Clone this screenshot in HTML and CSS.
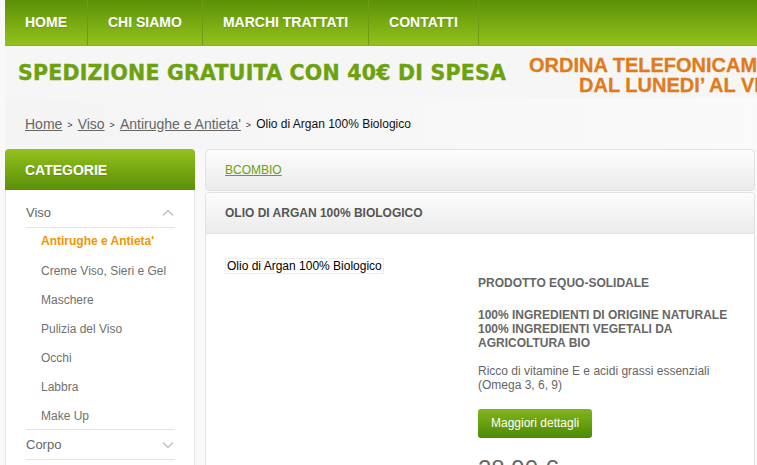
FILE: index.html
```html
<!DOCTYPE html>
<html lang="it">
<head>
<meta charset="utf-8">
<title>Olio di Argan 100% Biologico</title>
<link rel="stylesheet" href="styles.css">
</head>
<body>
<div class="page">
  <nav class="topnav">
    <a class="nav-item" href="#">HOME</a>
    <a class="nav-item" href="#">CHI SIAMO</a>
    <a class="nav-item" href="#">MARCHI TRATTATI</a>
    <a class="nav-item" href="#">CONTATTI</a>
  </nav>
  <div class="banner">
    <div class="promo">SPEDIZIONE GRATUITA CON 40€ DI SPESA</div>
    <div class="phone">
      <div class="phone-l1">ORDINA TELEFONICAMENTE</div>
      <div class="phone-l2">DAL LUNEDI’ AL VENERDI’</div>
    </div>
  </div>
  <div class="crumbs">
    <a href="#">Home</a><span class="sep">&gt;</span><a href="#">Viso</a><span class="sep">&gt;</span><a href="#">Antirughe e Antieta'</a><span class="sep">&gt;</span><span class="current">Olio di Argan 100% Biologico</span>
  </div>
  <div class="main">
    <aside class="sidebar">
      <div class="side-head">CATEGORIE</div>
      <ul class="cats">
        <li class="cat open">
          <div class="cat-row"><span>Viso</span><svg class="chev" width="12" height="8" viewBox="0 0 12 8"><path d="M1 6.5 L6 1.5 L11 6.5" fill="none" stroke="#bbb" stroke-width="1.2"/></svg></div>
          <ul class="subs">
            <li class="active">Antirughe e Antieta'</li>
            <li>Creme Viso, Sieri e Gel</li>
            <li>Maschere</li>
            <li>Pulizia del Viso</li>
            <li>Occhi</li>
            <li>Labbra</li>
            <li>Make Up</li>
          </ul>
        </li>
        <li class="cat">
          <div class="cat-row"><span>Corpo</span><svg class="chev" width="12" height="8" viewBox="0 0 12 8"><path d="M1 1.5 L6 6.5 L11 1.5" fill="none" stroke="#bbb" stroke-width="1.2"/></svg></div>
        </li>
      </ul>
    </aside>
    <section class="content">
      <div class="panel brand"><a href="#">BCOMBIO</a></div>
      <div class="panel product">
        <div class="prod-head">OLIO DI ARGAN 100% BIOLOGICO</div>
        <div class="prod-body">
          <div class="prod-img"><span class="alt">Olio di Argan 100% Biologico</span></div>
          <div class="prod-info">
            <p class="strong">PRODOTTO EQUO-SOLIDALE</p>
            <p class="strong tight">100% INGREDIENTI DI ORIGINE NATURALE<br>100% INGREDIENTI VEGETALI DA AGRICOLTURA BIO</p>
            <p class="desc">Ricco di vitamine E e acidi grassi essenziali (Omega 3, 6, 9)</p>
            <a class="btn" href="#">Maggiori dettagli</a>
            <div class="price">28,90 €</div>
          </div>
        </div>
      </div>
    </section>
  </div>
</div>
</body>
</html>
```

FILE: styles.css
```css
html, body {
  margin: 0;
  padding: 0;
  overflow: hidden;
}
body {
  background: #f9f9f9;
  font-family: "Liberation Sans", Arial, sans-serif;
  color: #666;
}
.page {
  padding-left: 5px;
  width: 900px;
}
.topnav {
  display: flex;
  height: 45px;
  background: linear-gradient(#5c9106, #93c11c);
  border-bottom: 1px solid #86b524;
}
.nav-item {
  display: flex;
  align-items: center;
  padding: 0 20px 2px;
  border-right: 1px solid #6d9b14;
  color: #fff;
  font-weight: bold;
  font-size: 14px;
  text-decoration: none;
  text-shadow: 0 1px 0 rgba(0,0,0,0.15);
}
.banner {
  display: flex;
  align-items: flex-start;
  height: 52px;
  background: #f6f6f6;
  white-space: nowrap;
}
.promo {
  margin: 15px 0 0 13px;
  font-family: "DejaVu Sans", "Liberation Sans", sans-serif;
  font-size: 20.5px;
  font-weight: bold;
  letter-spacing: 0.22px;
  color: #6da20f;
  -webkit-text-stroke: 0.4px #6da20f;
}
.phone {
  margin: 9px 0 0 23px;
  font-size: 20px;
  font-weight: bold;
  color: #e07b1c;
  line-height: 20px;
  -webkit-text-stroke: 0.3px #e07b1c;
}
.phone-l2 {
  padding-left: 50px;
}
.crumbs {
  height: 51px;
  display: flex;
  align-items: center;
  padding-left: 20px;
  font-size: 14px;
  background: linear-gradient(90deg, #f4f4f4, #fbfbfb);
}
.crumbs a {
  color: #666;
}
.crumbs .sep {
  font-size: 9px;
  margin: 2px 5px 0;
  color: #333;
}
.crumbs .current {
  font-size: 12px;
  color: #111;
}
.main {
  display: flex;
  gap: 10px;
}
.sidebar {
  width: 190px;
  flex: none;
}
.side-head {
  height: 41px;
  display: flex;
  align-items: center;
  padding-left: 20px;
  border-radius: 4px 4px 0 0;
  background: linear-gradient(#94c11e, #5a8f07);
  color: #fff;
  font-weight: bold;
  font-size: 14px;
  text-shadow: 0 1px 0 rgba(0,0,0,0.15);
}
.cats {
  list-style: none;
  margin: 0;
  padding: 8px 19px 0 20px;
  background: #fff;
  border-left: 1px solid #e6e6e6;
  border-right: 1px solid #e6e6e6;
  height: 400px;
}
.cat {
  border-bottom: 1px solid #e4e4e4;
}
.cat-row {
  display: flex;
  justify-content: space-between;
  align-items: center;
  height: 29px;
  font-size: 13px;
  color: #666;
  padding-right: 1px;
}
.open .cat-row {
  height: 29px;
}
.subs {
  list-style: none;
  margin: 0;
  padding: 0 0 0 15px;
  border-top: 1px solid #e4e4e4;
}
.subs li {
  height: 29px;
  line-height: 29px;
  font-size: 12px;
  color: #707070;
}
.subs li:last-child {
  height: 27px;
}
.subs li.active {
  color: #f29400;
  font-weight: bold;
  line-height: 27px;
}
.content {
  flex: none;
  width: 550px;
}
.panel {
  background: #fff;
  border: 1px solid #e2e2e2;
  border-radius: 4px;
}
.brand {
  height: 40px;
  display: flex;
  align-items: center;
  padding-left: 19px;
  background: linear-gradient(#fdfdfd, #ebebeb);
  font-size: 12px;
  margin-bottom: 1px;
}
.brand a {
  color: #69a10c;
}
.prod-head {
  height: 40px;
  display: flex;
  align-items: center;
  padding-left: 19px;
  background: linear-gradient(#fdfdfd, #ebebeb);
  border-bottom: 1px solid #e4e4e4;
  border-radius: 4px 4px 0 0;
  font-size: 12px;
  font-weight: bold;
  color: #555;
}
.prod-body {
  display: flex;
  padding: 22px 20px 0 19px;
  height: 300px;
}
.prod-img {
  width: 253px;
  flex: none;
}
.alt {
  display: inline-block;
  font-size: 12px;
  color: #000;
  line-height: 14px;
  border: 1px solid #ececec;
  padding: 0 1px;
}
.prod-info {
  width: 262px;
  padding-top: 20px;
}
.prod-info p {
  margin: 0 0 18px;
  font-size: 12px;
  line-height: 14px;
}
.prod-info .strong {
  font-weight: bold;
  color: #666;
}
.prod-info .tight {
  margin-bottom: 14px;
}
.prod-info .desc {
  color: #666;
  margin-bottom: 17px;
}
.btn {
  display: inline-block;
  height: 29px;
  line-height: 29px;
  padding: 0 13px;
  border-radius: 3px;
  background: linear-gradient(#80b51b, #4e8905);
  color: #fff;
  font-size: 12px;
  text-decoration: none;
}
.price {
  margin-top: 17px;
  font-size: 24px;
  color: #666;
}
```
